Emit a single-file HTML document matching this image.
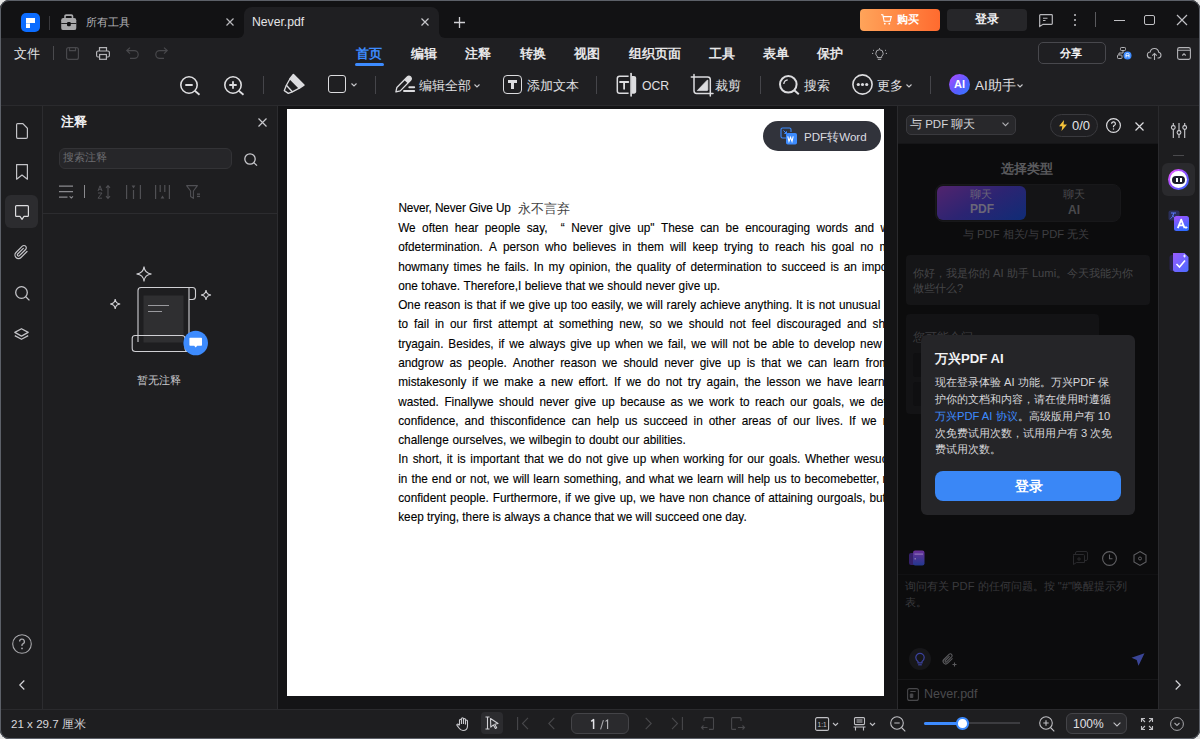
<!DOCTYPE html>
<html><head><meta charset="utf-8">
<style>
*{margin:0;padding:0;box-sizing:border-box}
html,body{width:1200px;height:739px;overflow:hidden;background:#e6e6e6;font-family:"Liberation Sans",sans-serif}
.win{position:absolute;left:0;top:0;width:1200px;height:739px;border-radius:9px;overflow:hidden;background:#1e1e20}
.frame{position:absolute;left:0;top:0;width:1200px;height:739px;border:1px solid #5c6068;border-radius:9px;z-index:50}
.a{position:absolute}
.t{position:absolute;white-space:nowrap;line-height:1}
svg{position:absolute;overflow:visible}
.mn{position:absolute;top:47px;font-size:13px;font-weight:bold;color:#e6e6e8;white-space:nowrap;line-height:14px}
.tb{position:absolute;top:78px;font-size:13px;color:#e0e0e2;white-space:nowrap;line-height:15px}
.sep{position:absolute;width:1px;background:#45454a}
</style></head><body>
<div class="win">
<!-- ============ TITLE BAR ============ -->
<div class="a" style="left:0;top:0;width:1200px;height:38px;background:#121214"></div>
<!-- logo -->
<div class="a" style="left:21px;top:13px;width:19px;height:19px;border-radius:5px;background:#0b6cff"></div>
<div class="a" style="left:26px;top:18px;width:9px;height:5px;background:#fff"></div>
<div class="a" style="left:26px;top:23px;width:4px;height:5px;background:#fff"></div>
<div class="a" style="left:26px;top:23px;width:4px;height:1px;background:#9cc4ff"></div>
<div class="sep" style="left:49px;top:16px;height:14px;background:#38383c"></div>
<!-- toolbox icon -->
<svg style="left:61px;top:14px" width="16" height="17" viewBox="0 0 16 17">
 <path d="M3.2 4.2V2.2C3.2 1 4 .2 5.2.2h5.1c1.2 0 2 .8 2 2v2h-1.6V2.6c0-.4-.3-.7-.7-.7H5.5c-.4 0-.7.3-.7.7v1.6z" fill="#a9a9ab"/>
 <rect x=".2" y="4" width="15.1" height="12.1" rx="2.2" fill="#a9a9ab"/>
 <rect x=".2" y="9" width="15.1" height="0.9" fill="#121214"/>
 <rect x="6" y="8" width="3.8" height="4.2" rx="1.2" fill="#121214"/>
</svg>
<div class="t" style="left:86px;top:17px;font-size:11px;color:#b4b4b8">所有工具</div>
<svg style="left:226px;top:18px" width="8" height="8" viewBox="0 0 8 8"><path d="M0.5 .5L7.5 7.5M7.5 .5L.5 7.5" stroke="#b8b8bc" stroke-width="1.2"/></svg>
<!-- active tab -->
<div class="a" style="left:244px;top:7px;width:195px;height:31px;background:#1f1f22;border-radius:8px 8px 0 0"></div>
<div class="a" style="left:236px;top:30px;width:8px;height:8px;background:#1f1f22"></div>
<div class="a" style="left:236px;top:22px;width:8px;height:16px;background:#121214;border-radius:0 0 6px 0"></div>
<div class="a" style="left:439px;top:30px;width:8px;height:8px;background:#1f1f22"></div>
<div class="a" style="left:439px;top:22px;width:8px;height:16px;background:#121214;border-radius:0 0 0 6px"></div>
<div class="t" style="left:252px;top:16px;font-size:12.2px;color:#e4e4e6">Never.pdf</div>
<svg style="left:421px;top:18px" width="8" height="8" viewBox="0 0 8 8"><path d="M0.5 .5L7.5 7.5M7.5 .5L.5 7.5" stroke="#c8c8cc" stroke-width="1.2"/></svg>
<svg style="left:454px;top:17px" width="11" height="11" viewBox="0 0 11 11"><path d="M5.5 0V11M0 5.5H11" stroke="#d0d0d4" stroke-width="1.3"/></svg>
<!-- buy button -->
<div class="a" style="left:860px;top:9px;width:80px;height:22px;border-radius:4px;background:linear-gradient(90deg,#ffa45a,#ff6b2f)"></div>
<svg style="left:881px;top:14px" width="11" height="11" viewBox="0 0 11 11"><path d="M0 .8h1.8l1.3 6.4h6l1.2-4.6H2.6" fill="none" stroke="#fff" stroke-width="1.1"/><circle cx="3.8" cy="9.7" r=".9" fill="#fff"/><circle cx="8.3" cy="9.7" r=".9" fill="#fff"/></svg>
<div class="t" style="left:897px;top:14px;font-size:11px;font-weight:bold;color:#fff">购买</div>
<!-- login button -->
<div class="a" style="left:947px;top:9px;width:80px;height:22px;border-radius:4px;background:#262629"></div>
<div class="t" style="left:975px;top:14px;font-size:11.5px;font-weight:bold;color:#f0f0f2">登录</div>
<!-- feedback icon -->
<svg style="left:1039px;top:14px" width="14" height="13" viewBox="0 0 14 13"><path d="M1.5 .7h11c.5 0 .8.3.8.8v8c0 .5-.3.8-.8.8H4L.7 12.5V1.5c0-.5.3-.8.8-.8z" fill="none" stroke="#b8b8bc" stroke-width="1.2"/><path d="M4 4.3h4.5M4 6.5h2.5" stroke="#b8b8bc" stroke-width="1.1"/></svg>
<div class="a" style="left:1074px;top:14px;width:2px;height:2px;border-radius:1px;background:#c0c0c4"></div>
<div class="a" style="left:1074px;top:19px;width:2px;height:2px;border-radius:1px;background:#c0c0c4"></div>
<div class="a" style="left:1074px;top:24px;width:2px;height:2px;border-radius:1px;background:#c0c0c4"></div>
<div class="sep" style="left:1095px;top:12px;height:15px;background:#5a5a5e"></div>
<div class="a" style="left:1114px;top:20px;width:11px;height:1px;background:#c0c0c4"></div>
<div class="a" style="left:1144px;top:15px;width:11px;height:10px;border:1.3px solid #c0c0c4;border-radius:2px"></div>
<svg style="left:1177px;top:15px" width="10" height="10" viewBox="0 0 10 10"><path d="M0 0L10 10M10 0L0 10" stroke="#c0c0c4" stroke-width="1.2"/></svg>

<!-- ============ TOOLBAR ============ -->
<div class="a" style="left:0;top:38px;width:1200px;height:67px;background:#1f1f22"></div>
<div class="a" style="left:0;top:105px;width:1200px;height:1px;background:#2a2a2d"></div>
<div class="t" style="left:14px;top:47px;font-size:13px;color:#e4e4e6">文件</div>
<div class="sep" style="left:53px;top:46px;height:14px;background:#4a4a4e"></div>
<!-- save -->
<svg style="left:66px;top:47px" width="13" height="13" viewBox="0 0 13 13"><rect x=".6" y=".6" width="11.8" height="11.8" rx="2" fill="none" stroke="#48484c" stroke-width="1.2"/><path d="M3.5 .6v3h6v-3" fill="none" stroke="#48484c" stroke-width="1.2"/></svg>
<!-- print -->
<svg style="left:96px;top:47px" width="14" height="13" viewBox="0 0 14 13"><path d="M3.5 4V.7h7V4" fill="none" stroke="#b4b4b8" stroke-width="1.2"/><rect x=".6" y="4" width="12.8" height="6" rx="1.5" fill="none" stroke="#b4b4b8" stroke-width="1.2"/><rect x="3.6" y="7.5" width="6.8" height="4.8" fill="#1f1f22" stroke="#b4b4b8" stroke-width="1.2"/></svg>
<!-- undo/redo -->
<svg style="left:126px;top:47px" width="13" height="13" viewBox="0 0 13 13"><path d="M4 .6L.8 3.6 4 6.6M.8 3.6h7.5a3.9 3.9 0 0 1 0 7.8H4" fill="none" stroke="#48484c" stroke-width="1.2"/></svg>
<svg style="left:155px;top:47px" width="13" height="13" viewBox="0 0 13 13"><path d="M9 .6l3.2 3L9 6.6M12.2 3.6H4.7a3.9 3.9 0 0 0 0 7.8H9" fill="none" stroke="#48484c" stroke-width="1.2"/></svg>

<div class="mn" style="left:356px;color:#3d8bff">首页</div>
<div class="a" style="left:355px;top:63px;width:29px;height:3px;border-radius:2px;background:#3d8bff"></div>
<div class="mn" style="left:411px">编辑</div>
<div class="mn" style="left:465px">注释</div>
<div class="mn" style="left:520px">转换</div>
<div class="mn" style="left:574px">视图</div>
<div class="mn" style="left:629px">组织页面</div>
<div class="mn" style="left:709px">工具</div>
<div class="mn" style="left:763px">表单</div>
<div class="mn" style="left:817px">保护</div>
<!-- bulb -->
<svg style="left:872px;top:48px" width="15" height="12" viewBox="0 0 15 12"><path d="M5.3 8.2C4.3 7.5 3.8 6.5 3.8 5.4a3.7 3.7 0 0 1 7.4 0c0 1.1-.5 2.1-1.5 2.8v1.4H5.3z" fill="none" stroke="#b0b0b4" stroke-width="1"/><path d="M5.8 11.3h3.4M7.5 .2v1M1 2l.9.6M14 2l-.9.6M0 5.4h1.2M15 5.4h-1.2" stroke="#b0b0b4" stroke-width="1"/></svg>
<!-- share -->
<div class="a" style="left:1038px;top:42px;width:68px;height:22px;border:1px solid #48484d;border-radius:5px"></div>
<div class="t" style="left:1060px;top:48px;font-size:11px;font-weight:bold;color:#f2f2f4">分享</div>
<svg style="left:1117px;top:47px" width="15" height="13" viewBox="0 0 15 13"><rect x="3.5" y=".5" width="5" height="3" rx=".8" fill="none" stroke="#b4b4b8" stroke-width="1"/><path d="M6 3.5v2.5H2v2" fill="none" stroke="#b4b4b8" stroke-width="1"/><rect x=".5" y="8" width="4.5" height="3.5" rx=".8" fill="none" stroke="#b4b4b8" stroke-width="1"/><circle cx="10.5" cy="8.5" r="4" fill="#3d8bff"/><path d="M9 10.5V7.3c0-.5.6-.9 1.5-.9s1.5.4 1.5.9v3.2M9 8.7h3" stroke="#fff" stroke-width=".9" fill="none"/></svg>
<svg style="left:1147px;top:48px" width="15" height="12" viewBox="0 0 15 12"><path d="M4.5 10H3.5A3 3 0 0 1 3.2 4a4.3 4.3 0 0 1 8.5.3A2.9 2.9 0 0 1 11.5 10h-1" fill="none" stroke="#b4b4b8" stroke-width="1.1"/><path d="M7.5 12V5.5M5.2 7.6l2.3-2.2 2.3 2.2" fill="none" stroke="#b4b4b8" stroke-width="1.1"/></svg>
<svg style="left:1177px;top:47px" width="14" height="13" viewBox="0 0 14 13"><rect x=".6" y=".6" width="12.8" height="11.8" rx="1.8" fill="none" stroke="#b4b4b8" stroke-width="1.1"/><path d="M.6 3.3h12.8M5.3 8.5L7 6.8l1.7 1.7" fill="none" stroke="#b4b4b8" stroke-width="1.1"/></svg>

<!-- second row -->
<svg style="left:180px;top:76px" width="21" height="19" viewBox="0 0 21 19"><circle cx="9" cy="9" r="8.2" fill="none" stroke="#dcdcdf" stroke-width="1.6"/><path d="M14.8 14.8L19.5 18.8M5.3 9h7.4" stroke="#dcdcdf" stroke-width="1.8"/></svg>
<svg style="left:224px;top:76px" width="21" height="19" viewBox="0 0 21 19"><circle cx="9" cy="9" r="8.2" fill="none" stroke="#dcdcdf" stroke-width="1.6"/><path d="M14.8 14.8L19.5 18.8M5.3 9h7.4M9 5.3v7.4" stroke="#dcdcdf" stroke-width="1.8"/></svg>
<div class="sep" style="left:263px;top:76px;height:18px;background:#45454a"></div>
<!-- highlighter -->
<svg style="left:280px;top:70px" width="30" height="30" viewBox="0 0 30 30">
 <path d="M13.4 4.6L23.9 15.1 19.4 18.2 10 8.8z" fill="#dcdcdf" stroke="#dcdcdf" stroke-width="1.6" stroke-linejoin="round"/>
 <path d="M10 8.8L6.4 15.2 12.3 21.8 19.4 18.2" fill="none" stroke="#dcdcdf" stroke-width="1.3" stroke-linejoin="round"/>
 <path d="M6.4 15.2L4.3 20.6 8.3 23.4 12.3 21.8" fill="none" stroke="#dcdcdf" stroke-width="1.3" stroke-linejoin="round"/>
</svg>
<div class="a" style="left:328px;top:75px;width:18px;height:18px;border:1.6px solid #dcdcdf;border-radius:3px"></div>
<svg style="left:351px;top:83px" width="6" height="4" viewBox="0 0 6 4"><path d="M.5.5l2.5 2.5L5.5.5" fill="none" stroke="#c8c8cc" stroke-width="1.1"/></svg>
<div class="sep" style="left:375px;top:76px;height:18px;background:#45454a"></div>
<!-- edit pencil -->
<svg style="left:390px;top:70px" width="30" height="30" viewBox="0 0 30 30">
 <g transform="translate(5.9 21.9) rotate(-45.6)">
  <path d="M0 0L3.8-2.4H18.6A2.4 2.4 0 0 1 18.6 2.4H3.8z" fill="none" stroke="#dcdcdf" stroke-width="1.3" stroke-linejoin="round"/>
  <path d="M14.4-2.4H18.6A2.4 2.4 0 0 1 18.6 2.4H14.4z" fill="#dcdcdf"/>
 </g>
 <path d="M19.3 17.3H24.2M14 21H24.2" stroke="#dcdcdf" stroke-width="1.9" stroke-linecap="round"/>
</svg>
<div class="tb" style="left:419px">编辑全部</div>
<svg style="left:474px;top:84px" width="6" height="4" viewBox="0 0 6 4"><path d="M.5.5l2.5 2.5L5.5.5" fill="none" stroke="#c8c8cc" stroke-width="1.1"/></svg>
<!-- T box -->
<div class="a" style="left:503px;top:75px;width:19px;height:19px;border:1.6px solid #dcdcdf;border-radius:4px"></div>
<div class="a" style="left:508px;top:80px;width:9px;height:2.5px;background:#dcdcdf"></div>
<div class="a" style="left:511.3px;top:80px;width:2.6px;height:9px;background:#dcdcdf"></div>
<div class="tb" style="left:527px">添加文本</div>
<div class="sep" style="left:596px;top:76px;height:18px;background:#45454a"></div>
<!-- OCR icon -->
<svg style="left:612px;top:70px" width="30" height="30" viewBox="0 0 30 30">
 <path d="M16.6 6.3H7.6C6.2 6.3 5.3 7.2 5.3 8.6V21c0 1.4.9 2.3 2.3 2.3h9" fill="none" stroke="#dcdcdf" stroke-width="1.5"/>
 <path d="M8 12h8.3M12.1 12v6.8" stroke="#dcdcdf" stroke-width="1.8" stroke-linecap="round"/>
 <path d="M19.1 3.6V25.8" stroke="#dcdcdf" stroke-width="1.7" stroke-linecap="round"/>
 <path d="M19.8 6h2.2c1.3 0 2.2.9 2.2 2.2V21.5c0 1.3-.9 2.2-2.2 2.2h-2.2z" fill="#dcdcdf"/>
</svg>
<div class="tb" style="left:642px;font-size:12.2px;top:79px">OCR</div>
<!-- crop -->
<svg style="left:686px;top:70px" width="30" height="30" viewBox="0 0 30 30">
 <path d="M5.3 7.1H21.6c1.6 0 2.7 1.1 2.7 2.7V23.4M8 4.4V20.8c0 1.6 1.1 2.6 2.6 2.6H27" fill="none" stroke="#dcdcdf" stroke-width="1.5" stroke-linecap="round"/>
 <path d="M24.3 23.4V26" stroke="#dcdcdf" stroke-width="1.5" stroke-linecap="round"/>
 <path d="M11.3 20.6L21.2 10.2c.3-.3.6-.2.6.3V19.8c0 .5-.3.8-.8.8z" fill="#dcdcdf" stroke="#dcdcdf" stroke-width="0.8" stroke-linejoin="round"/>
</svg>
<div class="tb" style="left:715px">裁剪</div>
<div class="sep" style="left:760px;top:76px;height:18px;background:#45454a"></div>
<!-- search -->
<svg style="left:779px;top:75px" width="21" height="20" viewBox="0 0 21 20"><circle cx="9.3" cy="9.3" r="8.3" fill="none" stroke="#dcdcdf" stroke-width="2"/><path d="M15.3 15.3l4.5 4" stroke="#dcdcdf" stroke-width="2"/><path d="M4.8 9A4.5 4.5 0 0 1 8.7 4.8" fill="none" stroke="#dcdcdf" stroke-width="1.3"/></svg>
<div class="tb" style="left:804px">搜索</div>
<!-- more -->
<svg style="left:852px;top:74px" width="21" height="21" viewBox="0 0 21 21"><circle cx="10.5" cy="10.5" r="9.6" fill="none" stroke="#dcdcdf" stroke-width="1.6"/><circle cx="6.3" cy="10.5" r="1.6" fill="#dcdcdf"/><circle cx="10.5" cy="10.5" r="1.6" fill="#dcdcdf"/><circle cx="14.7" cy="10.5" r="1.6" fill="#dcdcdf"/></svg>
<div class="tb" style="left:877px">更多</div>
<svg style="left:906px;top:84px" width="6" height="4" viewBox="0 0 6 4"><path d="M.5.5l2.5 2.5L5.5.5" fill="none" stroke="#c8c8cc" stroke-width="1.1"/></svg>
<div class="sep" style="left:930px;top:76px;height:18px;background:#45454a"></div>
<div class="a" style="left:949px;top:74px;width:21px;height:21px;border-radius:50%;background:linear-gradient(135deg,#b04bff,#5a5cff 55%,#2f7bff)"></div>
<div class="t" style="left:952px;top:79px;font-size:11px;font-weight:bold;color:#fff;width:15px;text-align:center">AI</div>
<div class="tb" style="left:975px;font-size:13.5px">AI助手</div>
<svg style="left:1017px;top:84px" width="6" height="4" viewBox="0 0 6 4"><path d="M.5.5l2.5 2.5L5.5.5" fill="none" stroke="#c8c8cc" stroke-width="1.1"/></svg>
<!-- ============ LEFT RAIL ============ -->
<div class="a" style="left:0;top:106px;width:42px;height:604px;background:#1d1d1f"></div>
<div class="a" style="left:42px;top:106px;width:1px;height:604px;background:#2c2c2f"></div>
<svg style="left:16px;top:123px" width="12" height="16" viewBox="0 0 12 16"><path d="M1.6.6h5.2l4.6 4.7v8.6c0 .8-.6 1.5-1.4 1.5H1.6C.9 15.4.6 14.8.6 14V2.1C.6 1.3.9.6 1.6.6z" fill="none" stroke="#c4c4c8" stroke-width="1.2"/></svg>
<svg style="left:16px;top:164px" width="12" height="16" viewBox="0 0 12 16"><path d="M.6 .6h10.8v14.6L6 11 .6 15.2z" fill="none" stroke="#c4c4c8" stroke-width="1.2" stroke-linejoin="round"/></svg>
<div class="a" style="left:5px;top:195px;width:33px;height:33px;border-radius:6px;background:#2c2c2f"></div>
<svg style="left:15px;top:205px" width="14" height="15" viewBox="0 0 14 15"><path d="M1.5.6h11c.5 0 .9.4.9.9v9c0 .5-.4.9-.9.9H9L7 14.3 5 11.4H1.5c-.5 0-.9-.4-.9-.9v-9c0-.5.4-.9.9-.9z" fill="none" stroke="#dcdcdf" stroke-width="1.2" stroke-linejoin="round"/></svg>
<svg style="left:14px;top:245px" width="15" height="15" viewBox="0 0 15 15"><path d="M13 6.5L7 12.5a3.5 3.5 0 0 1-5-5l6.3-6.3a2.3 2.3 0 0 1 3.3 3.3L5.4 10.7a1.2 1.2 0 0 1-1.7-1.7L9.3 3.4" fill="none" stroke="#c4c4c8" stroke-width="1.2" stroke-linecap="round"/></svg>
<svg style="left:15px;top:286px" width="15" height="15" viewBox="0 0 15 15"><circle cx="6.5" cy="6.5" r="5.8" fill="none" stroke="#c4c4c8" stroke-width="1.3"/><path d="M10.8 10.8l3.6 3.6" stroke="#c4c4c8" stroke-width="1.3"/></svg>
<svg style="left:14px;top:328px" width="15" height="14" viewBox="0 0 15 14"><path d="M7.5.7l6.7 3.7-6.7 3.7L.8 4.4z" fill="none" stroke="#c4c4c8" stroke-width="1.2" stroke-linejoin="round"/><path d="M.8 7.6l6.7 3.7 6.7-3.7" fill="none" stroke="#c4c4c8" stroke-width="1.2" stroke-linejoin="round"/></svg>
<svg style="left:12px;top:634px" width="20" height="20" viewBox="0 0 20 20"><circle cx="10" cy="10" r="9.3" fill="none" stroke="#a8a8ac" stroke-width="1.1"/><path d="M7.6 7.6a2.4 2.4 0 1 1 3.3 2.2c-.6.3-.9.7-.9 1.3v1" fill="none" stroke="#a8a8ac" stroke-width="1.3"/><circle cx="10" cy="14.4" r=".9" fill="#a8a8ac"/></svg>
<svg style="left:19px;top:680px" width="6" height="10" viewBox="0 0 6 10"><path d="M5.3.5L.8 5l4.5 4.5" fill="none" stroke="#d0d0d4" stroke-width="1.2"/></svg>

<!-- ============ ANNOTATION PANEL ============ -->
<div class="a" style="left:43px;top:106px;width:234px;height:604px;background:#1e1e20"></div>
<div class="a" style="left:277px;top:106px;width:1px;height:604px;background:#2c2c2f"></div>
<div class="t" style="left:61px;top:115px;font-size:13px;font-weight:bold;color:#f0f0f2">注释</div>
<svg style="left:258px;top:118px" width="9" height="9" viewBox="0 0 9 9"><path d="M.5.5l8 8M8.5.5l-8 8" stroke="#c8c8cc" stroke-width="1.2"/></svg>
<div class="a" style="left:59px;top:148px;width:173px;height:21px;border:1px solid #333336;border-radius:6px;background:#262629"></div>
<div class="t" style="left:63px;top:152px;font-size:11.3px;color:#6c6c70">搜索注释</div>
<svg style="left:244px;top:153px" width="14" height="13" viewBox="0 0 14 13"><circle cx="6" cy="6" r="5.2" fill="none" stroke="#c8c8cc" stroke-width="1.3"/><path d="M9.8 9.6l3.2 3" stroke="#c8c8cc" stroke-width="1.3"/></svg>
<svg style="left:59px;top:185px" width="15" height="14" viewBox="0 0 15 14"><path d="M0 1.2h14M0 6.6h14M0 12.2h8.5" stroke="#8a8a8e" stroke-width="1.2"/><path d="M10.6 11.3l1.7 1.7 1.7-1.7" fill="none" stroke="#8a8a8e" stroke-width="1.1"/></svg>
<div class="a" style="left:84px;top:185px;width:1px;height:13px;background:#8a8a8e"></div>
<svg style="left:97px;top:185px" width="14" height="14" viewBox="0 0 14 14"><path d="M1 6L3 .8 5 6M1.6 4.3h2.8M1 8h4L1 13.2h4" fill="none" stroke="#505054" stroke-width="1"/><path d="M11 .5v13M9 2.8l2-2.3 2 2.3M9 11.2l2 2.3 2-2.3" fill="none" stroke="#505054" stroke-width="1.1"/></svg>
<svg style="left:126px;top:185px" width="15" height="14" viewBox="0 0 15 14"><path d="M.6 0v14M14.4 0v14M7.5 5v9" stroke="#505054" stroke-width="1.2"/><path d="M5.6.6h3.8L7.5 3.6z" fill="#505054"/></svg>
<svg style="left:155px;top:185px" width="15" height="14" viewBox="0 0 15 14"><path d="M.6 0v14M14.4 0v14M5.2 0v7M9.8 0v7" stroke="#505054" stroke-width="1.2"/><path d="M5.6 13.4h3.8L7.5 10.4z" fill="#505054"/></svg>
<svg style="left:186px;top:185px" width="15" height="14" viewBox="0 0 15 14"><path d="M.6.6h10.8L7.4 6v7.4L4.6 11.5V6z" fill="none" stroke="#505054" stroke-width="1.1" stroke-linejoin="round"/><rect x="11" y="8.5" width="3" height="1.3" fill="#505054"/><rect x="11" y="10.8" width="3" height="1.3" fill="#505054"/></svg>
<div class="a" style="left:43px;top:213px;width:234px;height:1px;background:#2c2c2f"></div>
<!-- illustration -->
<svg style="left:100px;top:255px" width="130" height="110" viewBox="0 0 130 110">
 <path d="M44 11.5 Q44.6 18.4 51.5 19 Q44.6 19.6 44 26.5 Q43.4 19.6 36.5 19 Q43.4 18.4 44 11.5z" fill="none" stroke="#d0d0d4" stroke-width="1.1"/>
 <path d="M15.2 44 Q15.6 48.6 20.2 49 Q15.6 49.4 15.2 54 Q14.8 49.4 10.2 49 Q14.8 48.6 15.2 44z" fill="none" stroke="#d0d0d4" stroke-width="1.1"/>
 <path d="M106 35 Q106.4 39.6 111 40 Q106.4 40.4 106 45 Q105.6 40.4 101 40 Q105.6 39.6 106 35z" fill="none" stroke="#d0d0d4" stroke-width="1.1"/>
 <rect x="43.5" y="40.5" width="40" height="47" fill="#2f2f31"/>
 <path d="M38 87V35.5c0-1.8 1.4-3 3-3h48" fill="none" stroke="#d0d0d4" stroke-width="1.1"/>
 <path d="M89 32.5h3.5c1.7 0 3 1.3 3 3v6c0 1.7-1.3 3-3 3H89" fill="none" stroke="#d0d0d4" stroke-width="1.1"/>
 <path d="M89 32.5v62" fill="none" stroke="#d0d0d4" stroke-width="1.1"/>
 <path d="M35 80.5h47c1.7 0 3 1.3 3 3V93c0 1.9 1.5 3.5 3.5 3.5H35.5c-1.9 0-3.3-1.5-3.3-3.3V83.5c0-1.7 1.3-3 2.8-3z" fill="none" stroke="#d0d0d4" stroke-width="1.1"/>
 <path d="M48 50.5h21M48 56.5h14" stroke="#9a9a9e" stroke-width="1.1"/>
 <circle cx="95.7" cy="88" r="12.3" fill="#3d8bfd"/>
 <path d="M90.2 82.8h11c.5 0 .8.3.8.8v6.4c0 .5-.3.8-.8.8h-4L95.7 92.5l-1.5-1.7h-4c-.5 0-.8-.3-.8-.8v-6.4c0-.5.3-.8.8-.8z" fill="#fff"/>
</svg>
<div class="t" style="left:137px;top:375px;font-size:11.3px;color:#c8c8cc">暂无注释</div>

<!-- ============ DOC AREA ============ -->
<div class="a" style="left:278px;top:106px;width:620px;height:604px;background:#141416"></div>
<div class="a" style="left:287px;top:109px;width:597px;height:587px;background:#fff;overflow:hidden">
<style>.ln{position:absolute;margin-top:0.6px;left:111.2px;height:14px;display:flex;justify-content:space-between;font-size:11.8px;line-height:11.8px;color:#000;-webkit-text-stroke:0.12px #000;white-space:nowrap;transform:scaleY(1.09);transform-origin:0 10px}</style>
<div class="t" style="left:111.4px;top:94.3px;font-size:11.8px;letter-spacing:-0.12px;color:#000;-webkit-text-stroke:0.12px #000;transform:scaleY(1.09);transform-origin:0 10px">Never, Never Give Up</div>
<div class="t" style="left:231px;top:93.5px;font-size:12.5px;color:#444;font-family:'Liberation Serif',serif">永不言弃</div>
<div class="ln" style="top:113.6px;width:498.8px"><span>We</span><span>often</span><span>hear</span><span>people</span><span>say,</span><span style="margin-left:7px">“</span><span>Never</span><span>give</span><span>up&quot;</span><span>These</span><span>can</span><span>be</span><span>encouraging</span><span>words</span><span>and</span><span>will</span></div>
<div class="ln" style="top:132.9px;width:514.8px"><span>ofdetermination.</span><span>A</span><span>person</span><span>who</span><span>believes</span><span>in</span><span>them</span><span>will</span><span>keep</span><span>trying</span><span>to</span><span>reach</span><span>his</span><span>goal</span><span>no</span><span>matter</span></div>
<div class="ln" style="top:152.1px;width:512.9px"><span>howmany</span><span>times</span><span>he</span><span>fails.</span><span>In</span><span>my</span><span>opinion,</span><span>the</span><span>quality</span><span>of</span><span>determination</span><span>to</span><span>succeed</span><span>is</span><span>an</span><span>important</span></div>
<div class="ln" style="top:171.4px;width:322.0px"><span>one</span><span>tohave.</span><span>Therefore,I</span><span>believe</span><span>that</span><span>we</span><span>should</span><span>never</span><span>give</span><span>up.</span></div>
<div class="ln" style="top:190.7px;width:482.3px"><span>One</span><span>reason</span><span>is</span><span>that</span><span>if</span><span>we</span><span>give</span><span>up</span><span>too</span><span>easily,</span><span>we</span><span>will</span><span>rarely</span><span>achieve</span><span>anything.</span><span>It</span><span>is</span><span>not</span><span>unusual</span></div>
<div class="ln" style="top:209.9px;width:509.2px"><span>to</span><span>fail</span><span>in</span><span>our</span><span>first</span><span>attempt</span><span>at</span><span>something</span><span>new,</span><span>so</span><span>we</span><span>should</span><span>not</span><span>feel</span><span>discouraged</span><span>and</span><span>should</span></div>
<div class="ln" style="top:229.2px;width:483.8px"><span>tryagain.</span><span>Besides,</span><span>if</span><span>we</span><span>always</span><span>give</span><span>up</span><span>when</span><span>we</span><span>fail,</span><span>we</span><span>will</span><span>not</span><span>be</span><span>able</span><span>to</span><span>develop</span><span>new</span></div>
<div class="ln" style="top:248.5px;width:490.9px"><span>andgrow</span><span>as</span><span>people.</span><span>Another</span><span>reason</span><span>we</span><span>should</span><span>never</span><span>give</span><span>up</span><span>is</span><span>that</span><span>we</span><span>can</span><span>learn</span><span>from</span></div>
<div class="ln" style="top:267.7px;width:499.5px"><span>mistakesonly</span><span>if</span><span>we</span><span>make</span><span>a</span><span>new</span><span>effort.</span><span>If</span><span>we</span><span>do</span><span>not</span><span>try</span><span>again,</span><span>the</span><span>lesson</span><span>we</span><span>have</span><span>learned</span></div>
<div class="ln" style="top:287.0px;width:513.6px"><span>wasted.</span><span>Finallywe</span><span>should</span><span>never</span><span>give</span><span>up</span><span>because</span><span>as</span><span>we</span><span>work</span><span>to</span><span>reach</span><span>our</span><span>goals,</span><span>we</span><span>develop</span></div>
<div class="ln" style="top:306.3px;width:514.1px"><span>confidence,</span><span>and</span><span>thisconfidence</span><span>can</span><span>help</span><span>us</span><span>succeed</span><span>in</span><span>other</span><span>areas</span><span>of</span><span>our</span><span>lives.</span><span>If</span><span>we</span><span>never</span></div>
<div class="ln" style="top:325.6px;width:287.6px"><span>challenge</span><span>ourselves,</span><span>we</span><span>wilbegin</span><span>to</span><span>doubt</span><span>our</span><span>abilities.</span></div>
<div class="ln" style="top:344.8px;width:515.2px"><span>In</span><span>short,</span><span>it</span><span>is</span><span>important</span><span>that</span><span>we</span><span>do</span><span>not</span><span>give</span><span>up</span><span>when</span><span>working</span><span>for</span><span>our</span><span>goals.</span><span>Whether</span><span>wesucceed</span></div>
<div class="ln" style="top:364.1px;width:511.4px"><span>in</span><span>the</span><span>end</span><span>or</span><span>not,</span><span>we</span><span>will</span><span>learn</span><span>something,</span><span>and</span><span>what</span><span>we</span><span>learn</span><span>will</span><span>help</span><span>us</span><span>to</span><span>becomebetter, more</span></div>
<div class="ln" style="top:383.4px;width:487.7px"><span>confident</span><span>people.</span><span>Furthermore,</span><span>if</span><span>we</span><span>give</span><span>up,</span><span>we</span><span>have</span><span>non</span><span>chance</span><span>of</span><span>attaining</span><span>ourgoals,</span><span>but</span></div>
<div class="ln" style="top:402.6px;width:348.5px"><span>keep</span><span>trying,</span><span>there</span><span>is</span><span>always</span><span>a</span><span>chance</span><span>that</span><span>we</span><span>will</span><span>succeed</span><span>one</span><span>day.</span></div>
<!-- PDF to Word pill -->
<div class="a" style="left:476px;top:12px;width:118px;height:30px;border-radius:15px;background:#31333b"></div>
<svg style="left:493px;top:18px" width="18" height="18" viewBox="0 0 18 18"><path d="M6 11H2.5C1.7 11 1 10.3 1 9.5v-7C1 1.7 1.7 1 2.5 1h7c.8 0 1.5.7 1.5 1.5V5" fill="none" stroke="#3d8bfd" stroke-width="1.1"/><path d="M3.5 3.5l3 3M6.5 4.3v2.2H4.3" fill="none" stroke="#3d8bfd" stroke-width="1"/><rect x="6" y="6" width="11" height="11.5" rx="1.8" fill="#3d8bfd"/><path d="M7.8 9.3l1.2 5 1.5-4 1.5 4 1.2-5" fill="none" stroke="#fff" stroke-width="1.1"/></svg>
<div class="t" style="left:517px;top:22px;font-size:11.6px;color:#dcdce0">PDF转Word</div>
</div>
<!-- ============ RIGHT AI PANEL ============ -->
<div class="a" style="left:897px;top:106px;width:1px;height:604px;background:#2a2a2d"></div>
<div class="a" style="left:898px;top:106px;width:260px;height:604px;background:#0c0c0d"></div>
<div class="a" style="left:898px;top:106px;width:260px;height:37px;background:#1b1b1d"></div>
<div class="a" style="left:906px;top:115px;width:110px;height:20px;border:1px solid #3a3a3e;border-radius:5px;background:#28282b"></div>
<div class="t" style="left:910px;top:119px;font-size:11.5px;color:#d4d4d8">与 PDF 聊天</div>
<svg style="left:1002px;top:122px" width="7" height="5" viewBox="0 0 7 5"><path d="M.5.7l3 3 3-3" fill="none" stroke="#b0b0b4" stroke-width="1.1"/></svg>
<div class="a" style="left:1050px;top:114px;width:48px;height:23px;border:1px solid #3a3a3e;border-radius:12px;background:#1f1f22"></div>
<svg style="left:1059px;top:120px" width="8" height="11" viewBox="0 0 8 11"><path d="M5 0L0 6.3h3.3L2.5 11 8 4.5H4.6z" fill="#f5c23a"/></svg>
<div class="t" style="left:1072px;top:119px;font-size:13px;color:#e4e4e8">0/0</div>
<svg style="left:1106px;top:118px" width="15" height="15" viewBox="0 0 15 15"><circle cx="7.5" cy="7.5" r="6.9" fill="none" stroke="#dcdcdf" stroke-width="1.2"/><path d="M5.6 5.8a1.9 1.9 0 1 1 2.6 1.7c-.5.2-.7.5-.7 1v.7" fill="none" stroke="#dcdcdf" stroke-width="1.2"/><circle cx="7.5" cy="11" r=".75" fill="#dcdcdf"/></svg>
<svg style="left:1135px;top:122px" width="9" height="9" viewBox="0 0 9 9"><path d="M.5.5l8 8M8.5.5l-8 8" stroke="#dcdcdf" stroke-width="1.2"/></svg>
<div class="a" style="left:898px;top:143px;width:260px;height:1px;background:#161618"></div>
<!-- dimmed content -->
<div class="t" style="left:1001px;top:162px;font-size:13px;font-weight:bold;color:#5a5a5d">选择类型</div>
<div class="a" style="left:935px;top:184px;width:186px;height:38px;border-radius:8px;background:#141416;border:1px solid #18181a"></div>
<div class="a" style="left:937px;top:186px;width:89px;height:34px;border-radius:6px;background:linear-gradient(150deg,#52246e,#2c2472 50%,#0f2c76)"></div>
<div class="t" style="left:970px;top:189px;font-size:11px;color:#6a6478">聊天</div>
<div class="t" style="left:970px;top:203px;font-size:12px;font-weight:bold;color:#6a6678">PDF</div>
<div class="t" style="left:1063px;top:189px;font-size:11px;color:#4a4a4d">聊天</div>
<div class="t" style="left:1068px;top:204px;font-size:12px;font-weight:bold;color:#4a4a4d">AI</div>
<div class="t" style="left:963px;top:229px;font-size:11.2px;color:#3e3e41">与 PDF 相关/与 PDF 无关</div>
<div class="a" style="left:906px;top:255px;width:244px;height:50px;border-radius:4px;background:#151517"></div>
<div class="t" style="left:913px;top:268px;font-size:11.2px;color:#454548">你好，我是你的 AI 助手 Lumi。今天我能为你</div>
<div class="t" style="left:913px;top:283px;font-size:11.2px;color:#454548">做些什么?</div>
<div class="a" style="left:906px;top:314px;width:193px;height:100px;border-radius:4px;background:#131315"></div>
<div class="t" style="left:913px;top:331px;font-size:12px;color:#3c3c3f">您可能会问</div>
<div class="a" style="left:913px;top:353px;width:180px;height:24px;border-radius:3px;background:#0f0f11"></div>
<div class="a" style="left:913px;top:382px;width:180px;height:24px;border-radius:3px;background:#0f0f11"></div>
<!-- popup -->
<div class="a" style="left:921px;top:335px;width:214px;height:180px;border-radius:6px;background:#252528"></div>
<div class="t" style="left:935px;top:352px;font-size:13.2px;font-weight:bold;color:#f2f2f4">万兴PDF AI</div>
<div class="t" style="left:935px;top:377px;font-size:11.2px;color:#d6d6da">现在登录体验 AI 功能。万兴PDF 保</div>
<div class="t" style="left:935px;top:394px;font-size:11.2px;color:#d6d6da">护你的文档和内容，请在使用时遵循</div>
<div class="t" style="left:935px;top:411px;font-size:11.2px;color:#d6d6da"><span style="color:#3d8bff">万兴PDF AI 协议</span>。高级版用户有 10</div>
<div class="t" style="left:935px;top:428px;font-size:11.2px;color:#d6d6da">次免费试用次数，试用用户有 3 次免</div>
<div class="t" style="left:935px;top:444px;font-size:11.2px;color:#d6d6da">费试用次数。</div>
<div class="a" style="left:935px;top:471px;width:186px;height:30px;border-radius:8px;background:#3a87f6"></div>
<div class="t" style="left:1015px;top:479px;font-size:14px;font-weight:bold;color:#fff">登录</div>
<!-- bottom input area -->
<svg style="left:909px;top:550px" width="16" height="16" viewBox="0 0 16 16"><defs><linearGradient id="gW" x1="0" y1="0" x2="0" y2="1"><stop offset="0" stop-color="#6a3098"/><stop offset="1" stop-color="#23388e"/></linearGradient></defs><rect x="0" y="3" width="8" height="12" rx="2" fill="#35206a"/><rect x="4" y="0.5" width="11.5" height="15" rx="2.2" fill="url(#gW)"/><rect x="5.5" y="3.6" width="8.5" height="1" fill="#9a80c0"/><rect x="5.5" y="8" width="1.5" height="1.5" fill="#8a70b0"/></svg>
<svg style="left:1072px;top:551px" width="16" height="14" viewBox="0 0 16 14"><rect x="3.5" y=".5" width="12" height="9" rx="1.5" fill="none" stroke="#2a2a2d" stroke-width="1"/><path d="M1.5 3.5h10c.5 0 1 .4 1 1v7H4.5L1.5 13.5V4.5c0-.6.4-1 1-1z" fill="#0c0c0d" stroke="#2a2a2d" stroke-width="1"/><path d="M7 6v4M5 8h4" stroke="#2a2a2d" stroke-width="1"/></svg>
<svg style="left:1102px;top:551px" width="15" height="15" viewBox="0 0 15 15"><circle cx="7.5" cy="7.5" r="6.9" fill="none" stroke="#606063" stroke-width="1.1"/><path d="M7.5 3.5v4.3h3" fill="none" stroke="#606063" stroke-width="1.1"/></svg>
<svg style="left:1133px;top:551px" width="14" height="15" viewBox="0 0 14 15"><path d="M7 .6l6 3.4v7l-6 3.4-6-3.4V4z" fill="none" stroke="#606063" stroke-width="1.1"/><circle cx="7" cy="7.5" r="1.5" fill="none" stroke="#606063" stroke-width="1"/></svg>
<div class="a" style="left:898px;top:574px;width:260px;height:1px;background:#111113"></div>
<div class="t" style="left:905px;top:581px;font-size:11.2px;color:#3a3a3d">询问有关 PDF 的任何问题。按 "#"唤醒提示列</div>
<div class="t" style="left:905px;top:597px;font-size:11.2px;color:#3a3a3d">表。</div>
<div class="a" style="left:909px;top:648px;width:22px;height:22px;border-radius:50%;background:#17171a"></div>
<svg style="left:915px;top:652px" width="10" height="14" viewBox="0 0 10 14"><path d="M3 9.5C1.6 8.6.8 7.3.8 5.6a4.2 4.2 0 0 1 8.4 0c0 1.7-.8 3-2.2 3.9v1.3H3z" fill="none" stroke="#3c43a0" stroke-width="1.2"/><path d="M3.2 12.8h3.6" stroke="#3c43a0" stroke-width="1.2"/></svg>
<svg style="left:942px;top:653px" width="16" height="14" viewBox="0 0 16 14"><path d="M10.5 5.3L5.6 10.2a2.6 2.6 0 0 1-3.7-3.7L7.3 1.1a1.8 1.8 0 0 1 2.5 2.5L4.6 8.8a.9.9 0 0 1-1.3-1.3L7.6 3.2" fill="none" stroke="#5a5a5d" stroke-width="1.1"/><path d="M12.5 9.5v4M10.5 11.5h4" stroke="#5a5a5d" stroke-width="1.1"/></svg>
<svg style="left:1131px;top:653px" width="14" height="13" viewBox="0 0 14 13"><path d="M13.5.3L.5 4.8l5.2 2.2 1.8 5.7z" fill="#3a4596"/></svg>
<div class="a" style="left:898px;top:679px;width:260px;height:1px;background:#161618"></div>
<svg style="left:907px;top:688px" width="12" height="13" viewBox="0 0 12 13"><rect x=".6" y=".6" width="10.8" height="11.8" rx="2" fill="none" stroke="#48484b" stroke-width="1.1"/><path d="M3.3 3.5h5.4M3.3 6h2.5v3.5H3.3z" fill="#48484b" stroke="#48484b" stroke-width="1"/></svg>
<div class="t" style="left:924px;top:688px;font-size:12.5px;color:#4a4a4d">Never.pdf</div>

<!-- ============ RIGHT RAIL ============ -->
<div class="a" style="left:1158px;top:106px;width:1px;height:604px;background:#2a2a2d"></div>
<div class="a" style="left:1159px;top:106px;width:41px;height:604px;background:#1d1d1f"></div>
<svg style="left:1171px;top:123px" width="16" height="15" viewBox="0 0 16 15"><path d="M2.3 0v15M8 0v15M13.7 0v15" stroke="#d0d0d4" stroke-width="1.1"/><circle cx="2.3" cy="4.5" r="1.9" fill="#1d1d1f" stroke="#d0d0d4" stroke-width="1.1"/><circle cx="8" cy="9.5" r="1.9" fill="#1d1d1f" stroke="#d0d0d4" stroke-width="1.1"/><circle cx="13.7" cy="4.5" r="1.9" fill="#1d1d1f" stroke="#d0d0d4" stroke-width="1.1"/></svg>
<div class="a" style="left:1173px;top:155px;width:11px;height:1px;background:#4a4a4d"></div>
<div class="a" style="left:1162px;top:163px;width:33px;height:33px;border-radius:6px;background:#2a2a2d"></div>
<div class="a" style="left:1168px;top:169px;width:21px;height:21px;border-radius:50%;background:linear-gradient(135deg,#ff5cff,#8a4bff 50%,#2f6bff)"></div>
<div class="a" style="left:1170px;top:171px;width:17px;height:17px;border-radius:50%;background:#fff"></div>
<div class="a" style="left:1172px;top:176px;width:13px;height:8px;border-radius:4px;background:#1a1a2a"></div>
<div class="a" style="left:1176px;top:178px;width:1.5px;height:3.5px;background:#fff"></div>
<div class="a" style="left:1180px;top:178px;width:1.5px;height:3.5px;background:#fff"></div>
<svg style="left:1168px;top:210px" width="22" height="22" viewBox="0 0 22 22"><rect x=".5" y=".5" width="11" height="10" rx="2" fill="#2a2f5a"/><path d="M3 3h5M5.5 3c0 3-1.5 4.5-3 5.5M4.5 5.5c1 1.5 2 2.3 3.5 2.8" stroke="#5a7aff" stroke-width="1" fill="none"/><rect x="6" y="6" width="15" height="15" rx="2.5" fill="url(#gA)"/><defs><linearGradient id="gA" x1="0.3" y1="0" x2="0.7" y2="1"><stop offset="0" stop-color="#9a55ff"/><stop offset="1" stop-color="#2a6bff"/></linearGradient><linearGradient id="gB" x1="0" y1="0" x2="1" y2="1"><stop offset="0" stop-color="#9a5cff"/><stop offset="1" stop-color="#4a6bff"/></linearGradient></defs><path d="M9.8 18.2l3.4-8.6 3.4 8.6M11 15.3h4.4" stroke="#fff" stroke-width="1.8" fill="none" stroke-linejoin="round"/><path d="M18 16v3M16.5 17.5h3" stroke="#fff" stroke-width=".9"/></svg>
<svg style="left:1169px;top:252px" width="20" height="20" viewBox="0 0 20 20"><rect x=".5" y="3" width="13" height="16" rx="2.5" fill="#2a2450"/><path d="M4 1h11.5l4 4v12.5c0 1.4-1.1 2.5-2.5 2.5H6.5C5.1 20 4 18.9 4 17.5z" fill="url(#gB)"/><path d="M7.5 12l3 3 5.5-6.5" stroke="#fff" stroke-width="1.6" fill="none"/><path d="M15.5 2.5v3M14 4h3" stroke="#fff" stroke-width=".8"/></svg>
<svg style="left:1175px;top:680px" width="6" height="10" viewBox="0 0 6 10"><path d="M.7.5L5.2 5 .7 9.5" fill="none" stroke="#d0d0d4" stroke-width="1.2"/></svg>

<!-- ============ STATUS BAR ============ -->
<div class="a" style="left:0;top:709px;width:1200px;height:1px;background:#2a2a2d"></div>
<div class="a" style="left:0;top:710px;width:1200px;height:29px;background:#1e1e20"></div>
<div class="t" style="left:11px;top:718px;font-size:11.6px;color:#d8d8dc">21 x 29.7 厘米</div>
<svg style="left:456px;top:717px" width="14" height="14" viewBox="0 0 14 14"><path d="M3.5 8V3.2a1 1 0 0 1 2 0V7M5.5 6.5V1.8a1 1 0 0 1 2 0V7M7.5 6.5V2.5a1 1 0 0 1 2 0V7.5M9.5 7V4a1 1 0 0 1 2 0v5c0 2.8-2 4.5-4.5 4.5-2 0-3-1-4-2.5L1 8.3c-.5-.7.3-1.6 1.2-1L3.5 8.5" fill="none" stroke="#c8c8cc" stroke-width="1.1"/></svg>
<div class="a" style="left:481px;top:712px;width:22px;height:22px;border-radius:4px;background:#2c2c2f"></div>
<svg style="left:485px;top:716px" width="14" height="14" viewBox="0 0 14 14"><path d="M.5 1h4M.5 13h4M2.5 1v12" stroke="#d0d0d4" stroke-width="1.1"/><path d="M5.5 2.5l7.5 5-3.3.7 2 3.5-1.3.7-2-3.5-2.6 2.2z" fill="none" stroke="#d0d0d4" stroke-width="1.1" stroke-linejoin="round"/></svg>
<svg style="left:517px;top:717px" width="12" height="13" viewBox="0 0 12 13"><path d="M.6 0v13M11 .8L5.5 6.5 11 12.2" fill="none" stroke="#48484b" stroke-width="1.1"/></svg>
<svg style="left:548px;top:717px" width="7" height="13" viewBox="0 0 7 13"><path d="M6.3.8L.8 6.5l5.5 5.7" fill="none" stroke="#48484b" stroke-width="1.1"/></svg>
<div class="a" style="left:571px;top:713px;width:58px;height:21px;border:1px solid #444448;border-radius:6px;background:#2a2a2d"></div>
<svg style="left:589px;top:719px" width="22" height="11" viewBox="0 0 22 11"><path d="M2.2 2.3L4.6.6V10" fill="none" stroke="#e4e4e8" stroke-width="1.5" stroke-linejoin="round"/><path d="M14.4 1.2L11.6 10.4" stroke="#a8a8ac" stroke-width="1.1"/><path d="M16.5 2.4L18.6 1V10" fill="none" stroke="#b8b8bc" stroke-width="1.1"/></svg>
<svg style="left:645px;top:717px" width="7" height="13" viewBox="0 0 7 13"><path d="M.7.8l5.5 5.7L.7 12.2" fill="none" stroke="#48484b" stroke-width="1.1"/></svg>
<svg style="left:671px;top:717px" width="12" height="13" viewBox="0 0 12 13"><path d="M11.4 0v13M1 .8l5.5 5.7L1 12.2" fill="none" stroke="#48484b" stroke-width="1.1"/></svg>
<svg style="left:701px;top:717px" width="13" height="14" viewBox="0 0 13 14"><path d="M3 4V1.6c0-.5.4-1 1-1h7.5c.5 0 1 .5 1 1v9.8c0 .5-.5 1-1 1H8M.5 10.5h6M2.5 8.5l-2 2 2 2" fill="none" stroke="#48484b" stroke-width="1.1"/></svg>
<svg style="left:731px;top:717px" width="14" height="14" viewBox="0 0 14 14"><path d="M10 4V1.6c0-.5-.4-1-1-1H1.6c-.5 0-1 .5-1 1v9.8c0 .5.5 1 1 1H5M7 10.5h6.5M11.5 8.5l2 2-2 2" fill="none" stroke="#48484b" stroke-width="1.1"/></svg>
<svg style="left:815px;top:717px" width="24" height="14" viewBox="0 0 24 14"><rect x=".6" y=".6" width="13" height="12.8" rx="1.5" fill="none" stroke="#c0c0c4" stroke-width="1.1"/><text x="7.1" y="9.5" font-size="6.5" fill="#c0c0c4" text-anchor="middle" font-family="Liberation Sans">1:1</text><path d="M18 6l2.5 2.5L23 6" fill="none" stroke="#c0c0c4" stroke-width="1.1"/></svg>
<svg style="left:853px;top:717px" width="24" height="14" viewBox="0 0 24 14"><rect x="1.5" y=".6" width="10" height="7" rx="1" fill="none" stroke="#c0c0c4" stroke-width="1.1"/><path d="M3.5 3h6M3.5 5h6M.5 10h12M2.5 10v3.5M10.5 10v3.5" stroke="#c0c0c4" stroke-width="1.1"/><path d="M17 6l2.5 2.5L22 6" fill="none" stroke="#c0c0c4" stroke-width="1.1"/></svg>
<svg style="left:890px;top:716px" width="16" height="16" viewBox="0 0 16 16"><circle cx="7" cy="7" r="6.3" fill="none" stroke="#c0c0c4" stroke-width="1.1"/><path d="M11.5 11.5l3.8 3.8M4.3 7h5.4" stroke="#c0c0c4" stroke-width="1.1"/></svg>
<div class="a" style="left:924px;top:722px;width:96px;height:2px;background:#3c3c40"></div>
<div class="a" style="left:924px;top:722px;width:38px;height:3px;border-radius:2px;background:#3d8bff"></div>
<div class="a" style="left:956px;top:717px;width:12.5px;height:12.5px;border-radius:50%;background:#fff;border:2px solid #3d8bff"></div>
<svg style="left:1039px;top:716px" width="16" height="16" viewBox="0 0 16 16"><circle cx="7" cy="7" r="6.3" fill="none" stroke="#c0c0c4" stroke-width="1.1"/><path d="M11.5 11.5l3.8 3.8M4.3 7h5.4M7 4.3v5.4" stroke="#c0c0c4" stroke-width="1.1"/></svg>
<div class="a" style="left:1066px;top:713px;width:61px;height:21px;border:1px solid #444448;border-radius:6px;background:#2a2a2d"></div>
<div class="t" style="left:1073px;top:718px;font-size:12px;color:#e0e0e4">100%</div>
<svg style="left:1113px;top:722px" width="8" height="5" viewBox="0 0 8 5"><path d="M.6.6l3.4 3.4L7.4.6" fill="none" stroke="#c0c0c4" stroke-width="1.1"/></svg>
<svg style="left:1141px;top:718px" width="12" height="12" viewBox="0 0 12 12"><path d="M.5 4V.5H4M8 .5h3.5V4M11.5 8v3.5H8M4 11.5H.5V8M1 1l3 3M11 1L8 4M11 11L8 8M1 11l3-3" fill="none" stroke="#c0c0c4" stroke-width="1.1"/></svg>
<svg style="left:1170px;top:717px" width="14" height="14" viewBox="0 0 14 14"><circle cx="7" cy="7" r="6.4" fill="none" stroke="#a8a8ac" stroke-width="1"/><path d="M4.5 6l2.5 2.5L9.5 6" fill="none" stroke="#a8a8ac" stroke-width="1.1"/></svg>
</div>
<div class="frame"></div>
</body></html>
